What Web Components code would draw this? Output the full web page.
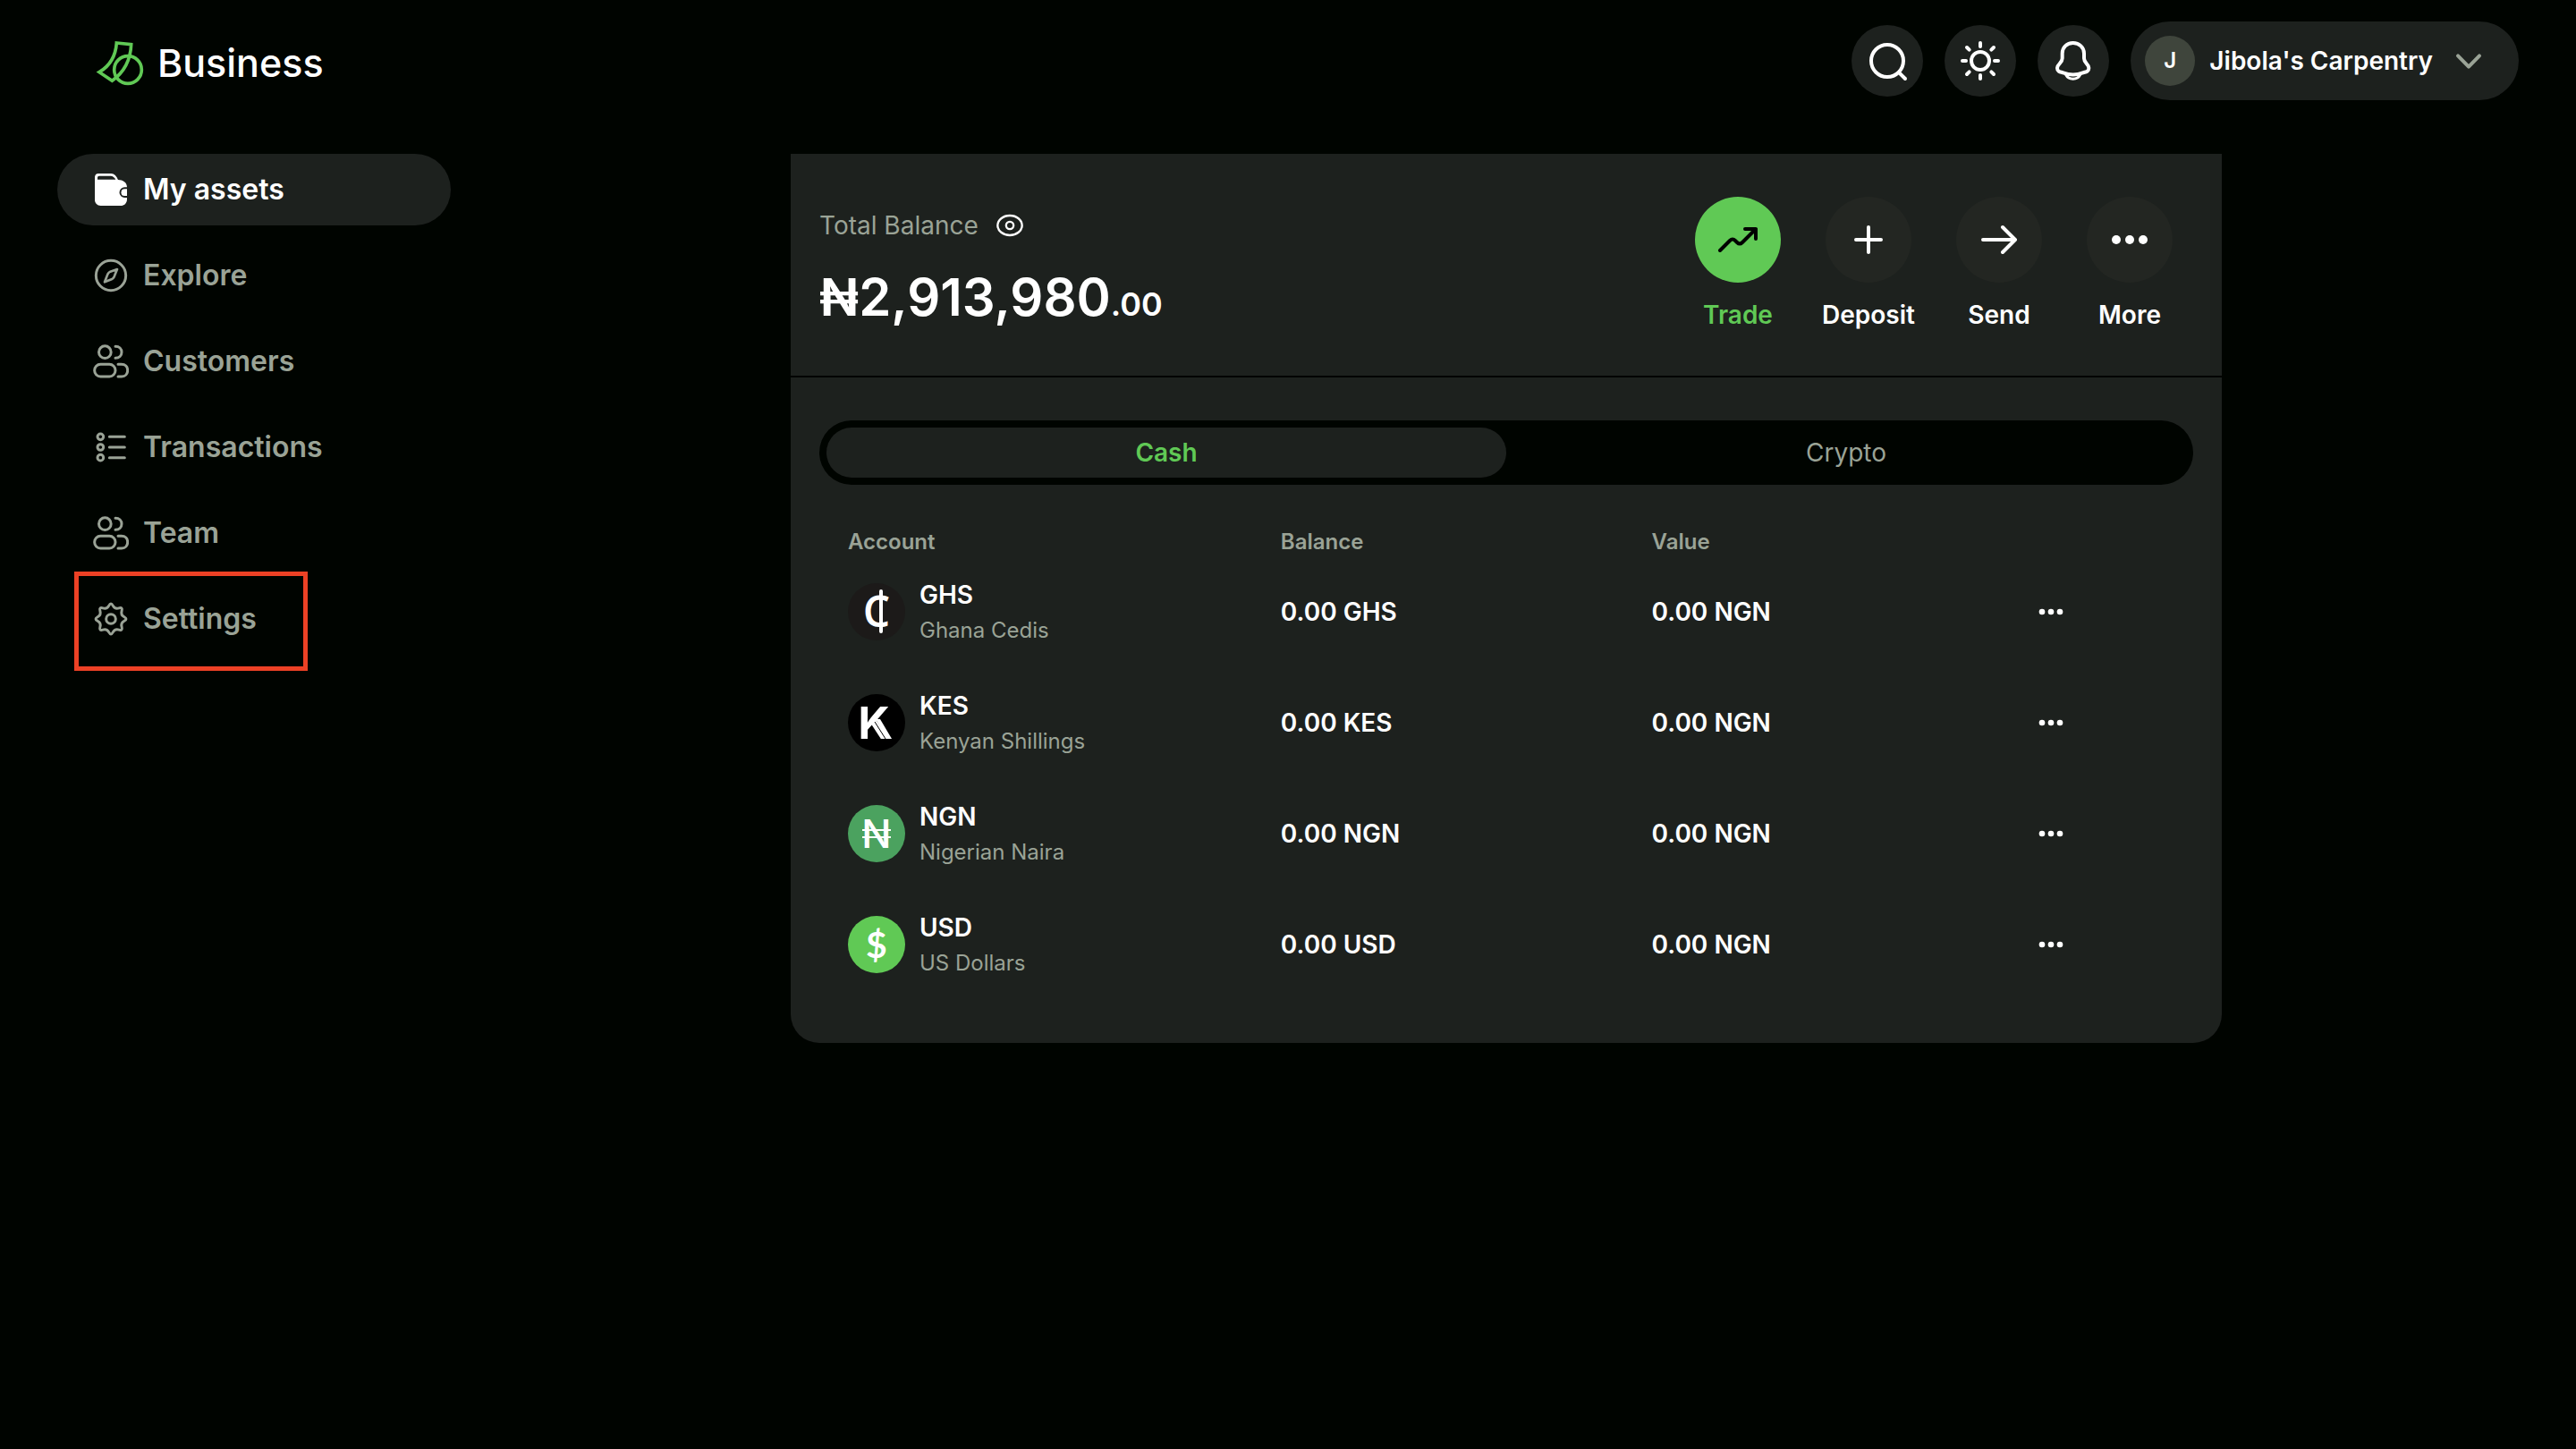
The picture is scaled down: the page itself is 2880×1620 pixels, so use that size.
<!DOCTYPE html>
<html lang="en">
<head>
<meta charset="utf-8">
<meta name="viewport" content="width=device-width, initial-scale=1">
<title>Business - My assets</title>
<style>
    :root {
        --bg: #000400;
        --surface: #1d211e;
        --raised: #232622;
        --muted: #9aa396;
        --green: #60c955;
        --white: #ffffff;
    }
    body {
        margin: 0;
        min-height: 100vh;
        background: var(--bg);
        color: var(--white);
        font-family: Inter, "Liberation Sans", sans-serif;
        font-size: 28px;
        line-height: 40px;
    }
</style>
</head>
<body>
<business-app></business-app>

<script>
// wavy outline with eight teeth, drawn as quadratic curves through the midpoints
const gearPath = (cx, cy, outer, inner) => {
    const points = (new Array(16)).fill(0).map((_, i) => {
        const r = i % 2 === 0 ? outer : inner;
        const a = i * Math.PI / 8;
        return [cx + r * Math.cos(a), cy + r * Math.sin(a)];
    });
    const mid = (a, b) => `${((a[0] + b[0]) / 2).toFixed(1)} ${((a[1] + b[1]) / 2).toFixed(1)}`;
    const curves = points.map((p, i) => `Q${p[0].toFixed(1)} ${p[1].toFixed(1)} ${mid(p, points[(i + 1) % 16])}`);
    return `M${mid(points[15], points[0])}${curves.join('')}Z`;
};

const people = `
    <circle cx="40" cy="29" r="20.5"/>
    <path d="M75 10C88 10 96 18 96 29.5S88 49 75 49"/>
    <rect x="5" y="70" width="70" height="41" rx="20"/>
    <path d="M84 70H95C108 70 116 78 116 90S108 111 96 111H84"/>`;

// name: [viewBox, stroke width, markup]
const icons = {
    logo: ['141 129 165 159', 11, `
        <g stroke-linejoin="miter">
        <circle cx="249" cy="231" r="46"/>
        <path d="M211 141L260 146C258 196 238 238 196 268L153 239C192 216 208 184 211 141Z"/>
        </g>`],
    wallet: ['132 576 120 120', 0, `
        <path fill="currentColor" fill-rule="evenodd" d="M150 582H193C203 582 212 592 216 603C232 603 246 612 246 628H238A17 17 0 0 0 238 663H246V668C246 682 236 690 225 690H158C146 690 138 682 138 670V594C138 587 143 582 150 582ZM147 602H208C205 595 198 590 191 590H153C149 590 147 592 147 597Z"/>
        <path fill="currentColor" d="M246 634V657H238A11.5 11.5 0 0 1 238 634Z"/>`],
    compass: ['132 54 120 120', 9, `
        <circle cx="192" cy="114" r="50"/>
        <path stroke-width="8" d="M213 93L203 118Q200 124 194 127L171 136L181 110Q184 104 190 101Z"/>`],
    people: ['0 0 120 120', 9, people],
    list: ['132 630 120 120', 9, `
        <circle cx="157" cy="655" r="10"/><circle cx="157" cy="690" r="10"/><circle cx="157" cy="725" r="10"/>
        <path d="M187 655H238M187 690H238M187 725H238"/>`],
    gear: ['0 0 120 120', 9, `<path d="${gearPath(60, 60, 57, 35)}"/><circle cx="60" cy="60" r="16"/>`],
    search: ['138 132 144 144', 12, '<circle cx="210" cy="204" r="54"/><path d="M250 244L270 264"/>'],
    sun: ['450 132 144 144', 12, `
        <circle cx="522" cy="204" r="30"/>
        <path d="M522 144V156M522 252V264M462 204H474M570 204H582M477 159L485 167M567 159L559 167M477 249L485 241M567 249L559 241"/>`],
    bell: ['762 132 144 144', 12, `
        <path d="M833 144C812 144 797 159 797 179V196C797 212 780 214 780 228C780 240 789 241 800 244C822 252 845 252 866 244C877 241 886 240 886 228C886 214 870 212 870 196V179C870 159 854 144 833 144Z"/>
        <path stroke-width="9" d="M809 251C818 269 848 269 857 251"/>`],
    chevron: ['1140 142 120 120', 12, '<path d="M1164 185L1200 222L1236 185"/>'],
    eye: ['735 225 102 102', 7, '<ellipse cx="786" cy="276" rx="41" ry="33"/><circle cx="786" cy="276" r="12.5"/>'],
    trade: ['58 84 48 48', 4, '<path d="M62 120L73 109Q76 106 79 109L81 111Q84 114 87 111L102 96M90 96H102V107"/>'],
    plus: ['0 0 48 48', 4, '<path d="M24 10V38M10 24H38"/>'],
    arrow: ['0 0 48 48', 4, '<path d="M6 24H41M28 10L42 24L28 38"/>'],
    dots: ['0 0 48 48', 0, `
        <g fill="currentColor"><circle cx="9" cy="24" r="5"/><circle cx="24" cy="24" r="5"/><circle cx="39" cy="24" r="5"/></g>`],
};

const accounts = [
    {code: 'GHS', name: 'Ghana Cedis', balance: '0.00 GHS', value: '0.00 NGN'},
    {code: 'KES', name: 'Kenyan Shillings', balance: '0.00 KES', value: '0.00 NGN'},
    {code: 'NGN', name: 'Nigerian Naira', balance: '0.00 NGN', value: '0.00 NGN'},
    {code: 'USD', name: 'US Dollars', balance: '0.00 USD', value: '0.00 NGN'},
];

// letter in the coin, then the bars that go over it
const coins = {
    GHS: {
        background: '#1c1a19',
        letter: '<text x="32" y="49" font-family="Open Sans" font-size="48" font-weight="600">C</text>',
        bars: '<path d="M37 9V54" stroke="#ffffff" stroke-width="4" stroke-linecap="round"/>',
    },
    KES: {
        background: '#000000',
        letter: '<text x="29" y="50" font-size="49" font-weight="700">K</text>',
        bars: '<path d="M31 28H36L49 50H44Z" fill="#ffffff"/><path d="M30 31L42 50" stroke="#000000" stroke-width="1"/>',
    },
    NGN: {
        background: '#4ba25f',
        letter: '<text x="32" y="48" font-size="44" font-weight="500">N</text>',
        bars: '<path d="M16 28H48M16 36H48" stroke="#ffffff" stroke-width="2"/>',
    },
    USD: {
        background: '#60c955',
        letter: '<text x="32" y="47" font-family="Lato" font-size="41" font-weight="700">$</text>',
        bars: '',
    },
};

const buttonReset = `
    button {
        margin: 0;
        padding: 0;
        border: 0;
        background: none;
        color: inherit;
        font: inherit;
        cursor: pointer;
    }
`;

class BaseElement extends HTMLElement {
    constructor() {
        super();
        this.attachShadow({mode: 'open'});
    }
    connectedCallback() {
        this.shadowRoot.innerHTML = this.render();
    }
}

class AppIcon extends BaseElement {
    render() {
        const [viewBox, width, markup] = icons[this.getAttribute('name')];
        return `
            <style>
            :host { display: block; flex: none; width: 40px; height: 40px; }
            svg { display: block; width: 100%; height: 100%; }
            </style>
            <svg viewBox="${viewBox}" fill="none" stroke="currentColor" stroke-width="${width}"
                stroke-linecap="round" stroke-linejoin="round" aria-hidden="true">${markup}</svg>`;
    }
}

class BrandLogo extends BaseElement {
    render() {
        return `
            <style>
            :host { display: block; }
            a {
                display: flex;
                align-items: center;
                gap: 14px;
                padding-top: 4px;
                color: var(--white);
                text-decoration: none;
                font-size: 43px;
                line-height: 52px;
                font-weight: 500;
            }
            app-icon { width: 55px; height: 53px; color: var(--green); }
            </style>
            <a href="#home"><app-icon name="logo"></app-icon><span><slot></slot></span></a>`;
    }
}

class RoundButton extends BaseElement {
    render() {
        return `
            <style>
            ${buttonReset}
            :host { display: block; }
            button {
                display: grid;
                place-items: center;
                width: 80px;
                height: 80px;
                border-radius: 50%;
                background: var(--surface);
            }
            app-icon { width: 48px; height: 48px; }
            </style>
            <button type="button" aria-label="${this.getAttribute('label')}">
                <app-icon name="${this.getAttribute('icon')}"></app-icon>
            </button>`;
    }
}

class ProfileMenu extends BaseElement {
    render() {
        return `
            <style>
            ${buttonReset}
            :host { display: block; }
            button {
                display: flex;
                align-items: center;
                gap: 16px;
                height: 88px;
                padding: 0 36px 0 16px;
                border-radius: 44px;
                background: var(--surface);
                font-weight: 600;
            }
            .avatar {
                width: 56px;
                border-radius: 50%;
                background: #3f453c;
                font-size: 24px;
                line-height: 56px;
            }
            .name { padding-right: 4px; }
            app-icon { color: var(--muted); }
            </style>
            <button type="button" aria-haspopup="menu">
                <span class="avatar">${this.getAttribute('initial')}</span>
                <span class="name"><slot></slot></span>
                <app-icon name="chevron"></app-icon>
            </button>`;
    }
}

class NavItem extends BaseElement {
    render() {
        return `
            <style>
            :host { display: block; position: relative; }
            a {
                display: flex;
                align-items: center;
                gap: 16px;
                height: 80px;
                padding: 0 40px;
                border-radius: 40px;
                color: var(--muted);
                font-size: 32px;
                font-weight: 600;
                text-decoration: none;
            }
            :host([active]) a { background: var(--surface); color: var(--white); }
            /* callout frame over the item */
            :host([marked])::after {
                content: "";
                position: absolute;
                box-sizing: border-box;
                left: 19px;
                top: -13px;
                width: 261px;
                height: 111px;
                border: 5px solid #ed4125;
                pointer-events: none;
            }
            </style>
            <a href="${this.getAttribute('href')}" ${this.hasAttribute('active') ? 'aria-current="page"' : ''}>
                <app-icon name="${this.getAttribute('icon')}"></app-icon>
                <span><slot></slot></span>
            </a>`;
    }
}

class QuickAction extends BaseElement {
    render() {
        return `
            <style>
            ${buttonReset}
            :host { display: block; width: 146px; }
            button {
                display: flex;
                flex-direction: column;
                align-items: center;
                gap: 16px;
                width: 100%;
                font-weight: 600;
            }
            .circle {
                display: grid;
                place-items: center;
                width: 96px;
                height: 96px;
                border-radius: 50%;
                background: var(--raised);
            }
            app-icon { width: 48px; height: 48px; }
            :host([primary]) button { color: var(--green); }
            :host([primary]) .circle { background: var(--green); color: #000000; }
            </style>
            <button type="button">
                <span class="circle"><app-icon name="${this.getAttribute('icon')}"></app-icon></span>
                <span><slot></slot></span>
            </button>`;
    }
}

class BalanceSummary extends BaseElement {
    render() {
        return `
            <style>
            ${buttonReset}
            :host {
                display: flex;
                justify-content: space-between;
                align-items: flex-end;
                padding: 48px 30px 48px 32px;
                border-bottom: 2px solid var(--bg);
            }
            .label { display: flex; align-items: center; gap: 18px; margin-bottom: 20px; color: var(--muted); }
            .label app-icon { width: 34px; height: 34px; color: var(--white); }
            .amount { margin: 0; font-size: 58px; line-height: 80px; font-weight: 600; }
            .amount small { font-size: 36px; line-height: 40px; }
            .actions { display: flex; }
            </style>
            <div>
                <div class="label">
                    <span>Total Balance</span>
                    <button type="button" aria-label="Hide balance"><app-icon name="eye"></app-icon></button>
                </div>
                <p class="amount">₦2,913,980<small>.00</small></p>
            </div>
            <div class="actions"><slot></slot></div>`;
    }
}

class AssetTabs extends BaseElement {
    render() {
        return `
            <style>
            ${buttonReset}
            :host {
                display: grid;
                grid-template-columns: 1fr 1fr;
                padding: 8px;
                border-radius: 36px;
                background: var(--bg);
            }
            button { height: 56px; border-radius: 28px; color: var(--muted); }
            button[aria-selected="true"] { background: var(--surface); color: var(--green); font-weight: 600; }
            </style>
            <button type="button" role="tab" aria-selected="true">Cash</button>
            <button type="button" role="tab" aria-selected="false">Crypto</button>`;
    }
    connectedCallback() {
        super.connectedCallback();
        this.setAttribute('role', 'tablist');
        const tabs = [...this.shadowRoot.querySelectorAll('button')];
        tabs.forEach(tab => tab.addEventListener('click', () => {
            tabs.forEach(t => t.setAttribute('aria-selected', String(t === tab)));
        }));
    }
}

class CurrencyCoin extends BaseElement {
    render() {
        const {background, letter, bars} = coins[this.getAttribute('code')];
        return `
            <style>
            :host { display: block; flex: none; width: 64px; height: 64px; }
            svg { display: block; width: 100%; height: 100%; }
            text { fill: #ffffff; text-anchor: middle; }
            </style>
            <svg viewBox="0 0 64 64" aria-hidden="true">
                <circle cx="32" cy="32" r="32" fill="${background}"/>
                ${letter}
                ${bars}
            </svg>`;
    }
}

class AccountTable extends BaseElement {
    render() {
        return `
            <style>
            ${buttonReset}
            :host { display: block; }
            table { width: 100%; table-layout: fixed; border-collapse: collapse; text-align: left; font-weight: 600; }
            th, td { box-sizing: border-box; padding: 0 0 0 32px; }
            thead th { color: var(--muted); font-size: 24px; line-height: 32px; font-weight: 600; }
            thead th:first-child { width: 31.5%; }
            thead th:nth-child(2), thead th:nth-child(3) { width: 27%; }
            tbody td { height: 124px; }
            .account { display: flex; align-items: center; gap: 16px; }
            .name { display: block; margin-top: 2px; color: var(--muted); font-size: 24px; line-height: 36px; font-weight: 400; }
            .code { display: block; }
            td button { display: grid; place-items: center; width: 64px; height: 64px; }
            td app-icon { width: 32px; height: 32px; }
            </style>
            <table>
                <thead>
                    <tr><th scope="col">Account</th><th scope="col">Balance</th><th scope="col">Value</th><td></td></tr>
                </thead>
                <tbody>
                    ${accounts.map(({code, name, balance, value}) => `
                    <tr>
                        <td>
                            <div class="account">
                                <currency-coin code="${code}"></currency-coin>
                                <div><span class="code">${code}</span><span class="name">${name}</span></div>
                            </div>
                        </td>
                        <td>${balance}</td>
                        <td>${value}</td>
                        <td><button type="button" aria-label="${code} options"><app-icon name="dots"></app-icon></button></td>
                    </tr>`).join('')}
                </tbody>
            </table>`;
    }
}

class BusinessApp extends BaseElement {
    render() {
        return `
            <style>
            :host { display: block; }
            header {
                display: flex;
                align-items: center;
                justify-content: space-between;
                padding: 24px 64px 24px 107px;
            }
            .tools { display: flex; align-items: center; gap: 24px; }
            .layout { display: flex; align-items: flex-start; gap: 48px; padding: 36px 64px; }
            nav { display: flex; flex: none; flex-direction: column; gap: 16px; width: 440px; }
            main { flex: 1; min-width: 0; }
            .card {
                max-width: 1600px;
                margin: 0 auto;
                border-radius: 0 0 32px 32px;
                background: var(--surface);
            }
            .holdings { padding: 48px 32px; }
            account-table { margin-top: 48px; }
            </style>
            <header>
                <brand-logo>Business</brand-logo>
                <div class="tools">
                    <round-button icon="search" label="Search"></round-button>
                    <round-button icon="sun" label="Theme"></round-button>
                    <round-button icon="bell" label="Notifications"></round-button>
                    <profile-menu initial="J">Jibola's Carpentry</profile-menu>
                </div>
            </header>
            <div class="layout">
                <nav>
                    <nav-item icon="wallet" href="#assets" active>My assets</nav-item>
                    <nav-item icon="compass" href="#explore">Explore</nav-item>
                    <nav-item icon="people" href="#customers">Customers</nav-item>
                    <nav-item icon="list" href="#transactions">Transactions</nav-item>
                    <nav-item icon="people" href="#team">Team</nav-item>
                    <nav-item icon="gear" href="#settings" marked>Settings</nav-item>
                </nav>
                <main>
                    <section class="card">
                        <balance-summary>
                            <quick-action icon="trade" primary>Trade</quick-action>
                            <quick-action icon="plus">Deposit</quick-action>
                            <quick-action icon="arrow">Send</quick-action>
                            <quick-action icon="dots">More</quick-action>
                        </balance-summary>
                        <div class="holdings">
                            <asset-tabs></asset-tabs>
                            <account-table></account-table>
                        </div>
                    </section>
                </main>
            </div>`;
    }
}

customElements.define('app-icon', AppIcon);
customElements.define('brand-logo', BrandLogo);
customElements.define('round-button', RoundButton);
customElements.define('profile-menu', ProfileMenu);
customElements.define('nav-item', NavItem);
customElements.define('quick-action', QuickAction);
customElements.define('balance-summary', BalanceSummary);
customElements.define('asset-tabs', AssetTabs);
customElements.define('currency-coin', CurrencyCoin);
customElements.define('account-table', AccountTable);
customElements.define('business-app', BusinessApp);
</script>
</body>
</html>
